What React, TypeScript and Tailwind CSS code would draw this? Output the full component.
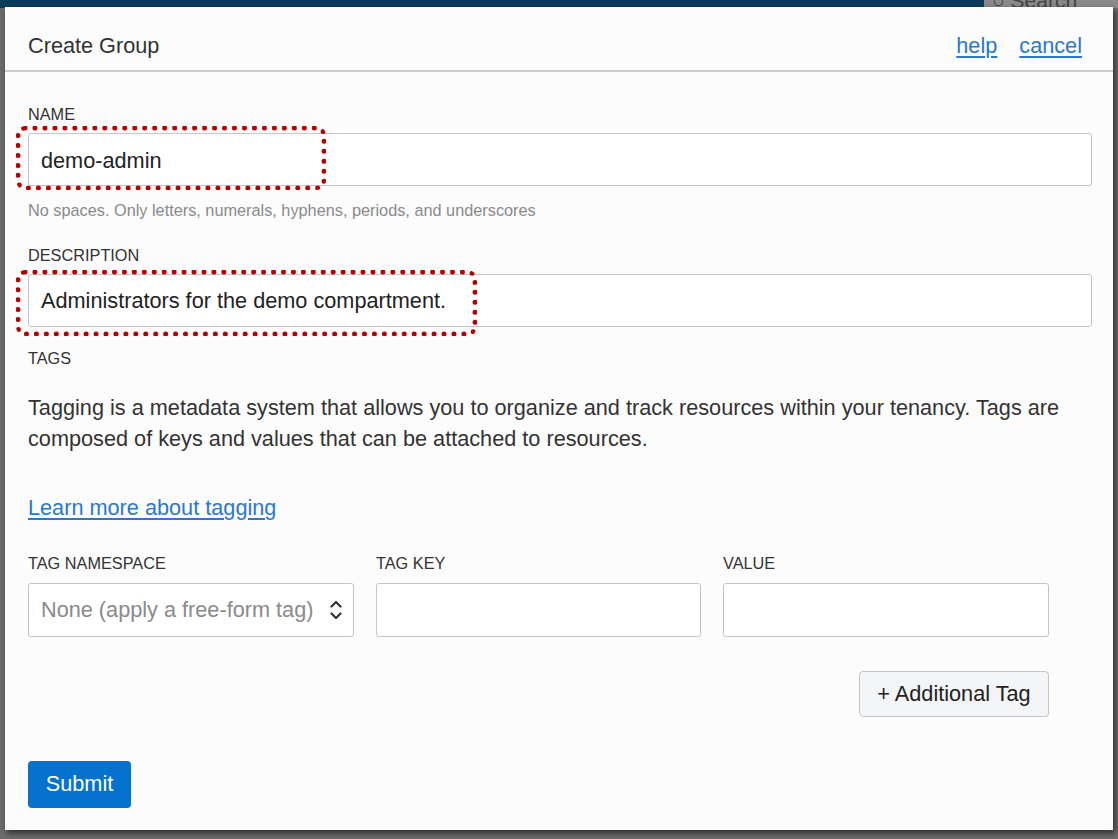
import React from "react";

function Label({ children }: { children: React.ReactNode }) {
  return (
    <div className="text-[16.3px] leading-[18px] text-[#333] uppercase">{children}</div>
  );
}

export default function App() {
  return (
    <div className="relative w-[1118px] h-[839px] overflow-hidden bg-[#6b6b6b] font-['Liberation_Sans',Arial,sans-serif]">
      {/* background page strip */}
      <div className="h-[8px] bg-[#0d3a5a] flex justify-end">
        <div className="w-[134px] h-[8px] bg-[#8a8a8a] overflow-hidden relative">
          <div className="absolute left-[8px] top-[-15px] text-[21px] text-[#444] whitespace-nowrap">○ Search</div>
        </div>
      </div>

      {/* modal */}
      <div className="absolute left-[5px] top-[7px] w-[1108px] h-[823px] bg-[#fcfcfc] shadow-[2px_3px_6px_rgba(0,0,0,0.6)] flex flex-col">
        <div className="h-[65px] flex items-center justify-between pl-[23px] pr-[31px] border-b-2 border-[#c9cacb]">
          <div className="text-[21.7px] text-[#333] pt-[16px]">Create Group</div>
          <div className="flex gap-[22px] text-[21.7px] text-[#2a78cf] pt-[16px]">
            <span className="underline underline-offset-[3px]">help</span>
            <span className="underline underline-offset-[3px]">cancel</span>
          </div>
        </div>

        <div className="pl-[23px] pr-[21px] pt-[33px] flex flex-col">
          <Label>NAME</Label>
          <div className="relative mt-[10px]">
            <div className="h-[53px] bg-white border border-[#c2c6ca] rounded-[3px] flex items-center pl-[12px] pt-[3px] text-[21.7px] text-[#222]">
              demo-admin
            </div>
            <div className="absolute left-[-12px] top-[-7px] w-[310px] h-[64px] border-[5px] border-dotted border-[#b40000] rounded-[9px] pointer-events-none" />
          </div>
          <div className="mt-[15px] text-[16.3px] leading-[18px] text-[#8a8a8a]">
            No spaces. Only letters, numerals, hyphens, periods, and underscores
          </div>

          <div className="mt-[27px]">
            <Label>DESCRIPTION</Label>
          </div>
          <div className="relative mt-[10px]">
            <div className="h-[53px] bg-white border border-[#c2c6ca] rounded-[3px] flex items-center pl-[12px] pt-[2px] text-[21.7px] text-[#222]">
              Administrators for the demo compartment.
            </div>
            <div className="absolute left-[-12px] top-[-4px] w-[461px] h-[66px] border-[5px] border-dotted border-[#b40000] rounded-[9px] pointer-events-none" />
          </div>

          <div className="mt-[22px]">
            <Label>TAGS</Label>
          </div>
          <p className="mt-[25px] w-[1076px] text-[21.7px] leading-[31px] text-[#333]">
            Tagging is a metadata system that allows you to organize and track resources within your tenancy. Tags are composed of keys and values that can be attached to resources.
          </p>
          <div className="mt-[42px] text-[21.7px] leading-[24px] text-[#2a78cf] underline underline-offset-[3px]">
            Learn more about tagging
          </div>

          <div className="mt-[34px] flex gap-[22px]">
            <div className="w-[326px] flex flex-col">
              <Label>TAG NAMESPACE</Label>
              <div className="mt-[11px] h-[54px] bg-white border border-[#c2c6ca] rounded-[3px] flex items-center justify-between pl-[12px] pr-[10px] text-[21.7px] text-[#8a8a8a]">
                <span className="whitespace-nowrap">None (apply a free-form tag)</span>
                <svg width="14" height="24" viewBox="0 0 14 24" fill="none" stroke="#333" strokeWidth="2.2" strokeLinecap="round" strokeLinejoin="round">
                  <path d="M2.5 8.5 L7 4 L11.5 8.5" />
                  <path d="M2.5 15.5 L7 20 L11.5 15.5" />
                </svg>
              </div>
            </div>
            <div className="w-[325px] flex flex-col">
              <Label>TAG KEY</Label>
              <div className="mt-[11px] h-[54px] bg-white border border-[#c2c6ca] rounded-[3px]" />
            </div>
            <div className="w-[326px] flex flex-col">
              <Label>VALUE</Label>
              <div className="mt-[11px] h-[54px] bg-white border border-[#c2c6ca] rounded-[3px]" />
            </div>
          </div>

          <div className="mt-[34px] flex justify-end pr-[43px]">
            <div className="h-[46px] w-[190px] bg-[#f4f5f6] border border-[#c2c6ca] rounded-[4px] flex items-center justify-center text-[21.7px] text-[#222]">
              + Additional Tag
            </div>
          </div>

          <div className="mt-[44px]">
            <div className="h-[47px] w-[103px] bg-[#0572ce] rounded-[4px] flex items-center justify-center text-[21.7px] text-white">
              Submit
            </div>
          </div>
        </div>
      </div>
    </div>
  );
}
